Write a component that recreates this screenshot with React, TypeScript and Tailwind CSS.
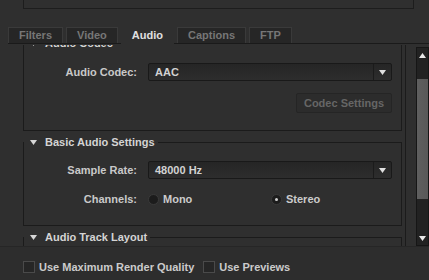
import React from "react";

const Tri = ({ down = true, color = "#d6d6d6" }: { down?: boolean; color?: string }) => (
  <svg width="7" height="5" viewBox="0 0 7 5">
    {down ? <polygon points="0,0 7,0 3.5,5" fill={color} /> : <polygon points="0,5 7,5 3.5,0" fill={color} />}
  </svg>
);

const Select = ({ value }: { value: string }) => (
  <div className="flex h-[18px] w-[244px] rounded-[2px] border border-[#191919] bg-gradient-to-b from-[#252525] to-[#2d2d2d]">
    <span className="flex-1 pl-[6px] text-[11px] font-bold leading-[16px] text-[#d2d2d2]">{value}</span>
    <span className="flex w-[18px] items-center justify-center border-l border-[#1b1b1b]">
      <Tri color="#e0e0e0" />
    </span>
  </div>
);

const Label = ({ children }: { children: React.ReactNode }) => (
  <span className="w-[113px] shrink-0 text-right text-[11px] font-bold text-[#c9c9c9]">{children}</span>
);

const Section = ({ title, children, className = "" }: { title: string; children?: React.ReactNode; className?: string }) => (
  <fieldset className={"m-0 min-w-0 border border-[#1b1b1b] p-0 " + className}>
    <legend className="p-0">
      <span className="flex h-[12px] items-center pl-[6px] pr-[3px]">
        <Tri />
        <span className="ml-[8px] text-[11px] font-bold leading-[12px] text-[#d4d4d4]">{title}</span>
      </span>
    </legend>
    {children}
  </fieldset>
);

const Radio = ({ checked, label }: { checked?: boolean; label: string }) => (
  <span className="flex items-center">
    <span className="flex h-[11px] w-[11px] items-center justify-center rounded-full border border-[#3a3a3a] bg-[#1c1c1c]">
      {checked && <span className="h-[3px] w-[3px] rounded-full bg-[#d0d0d0]" />}
    </span>
    <span className="ml-[4px] text-[11px] font-bold text-[#cbcbcb]">{label}</span>
  </span>
);

const Check = ({ label }: { label: string }) => (
  <span className="flex items-center">
    <span className="h-[12px] w-[12px] border border-[#4a4a4a] bg-[#262626]" />
    <span className="ml-[4px] text-[11px] font-bold text-[#cbcbcb]">{label}</span>
  </span>
);

export default function App() {
  const tabs = ["Filters", "Video", "Audio", "Captions", "FTP"];
  return (
    <div
      className="h-[280px] w-[429px] overflow-hidden bg-[#2f2f2f]"
      style={{ fontFamily: '"Liberation Sans", Arial, sans-serif' }}
    >
      <div className="ml-[23px] h-[9px] w-[391px] border-x border-b border-[#1d1d1d]" />
      <div className="ml-[8px] mt-[18px] flex h-[17px] items-start gap-[3px] border-b border-[#1a1a1a]">
        {tabs.map((t) =>
          t === "Audio" ? (
            <div key={t} className="relative z-10 flex h-[17px] items-center bg-[#2f2f2f] px-[11px] text-[11px] font-bold text-[#e0e0e0]">
              {t}
            </div>
          ) : (
            <div
              key={t}
              className="flex h-[16px] items-center border-x border-t border-[#3a3a3a] bg-[#262626] px-[10px] text-[11px] font-bold text-[#767676]"
            >
              {t}
            </div>
          )
        )}
      </div>
      <div className="h-[1px]" />
      <div className="flex h-[201px]">
        <div className="ml-[23px] w-[383px] overflow-hidden border-r border-[#1b1b1b] pr-[3px]">
          <div className="-mt-[8px]">
            <Section title="Audio Codec">
              <div className="flex items-center gap-[11px] pt-[14px]">
                <Label>Audio Codec:</Label>
                <Select value="AAC" />
              </div>
              <div className="flex justify-end pb-[17px] pr-[9px] pt-[12px]">
                <div className="flex h-[20px] w-[96px] items-center justify-center rounded-[2px] border border-[#252525] bg-[#2c2c2c] text-[11px] font-bold text-[#666666]">
                  Codec Settings
                </div>
              </div>
            </Section>
            <Section title="Basic Audio Settings" className="mt-[5px]">
              <div className="flex items-center gap-[11px] pt-[13px]">
                <Label>Sample Rate:</Label>
                <Select value="48000 Hz" />
              </div>
              <div className="mb-[20px] mt-[14px] flex h-[12px] items-center gap-[11px]">
                <Label>Channels:</Label>
                <div className="flex">
                  <div className="w-[123px]">
                    <Radio label="Mono" />
                  </div>
                  <Radio checked label="Stereo" />
                </div>
              </div>
            </Section>
            <Section title="Audio Track Layout" className="mt-[5px]">
              <div className="h-[40px]" />
            </Section>
          </div>
        </div>
        <div className="ml-[10px] mt-[2px] flex h-[199px] w-[13px] flex-col border border-[#161616] bg-[#222222]">
          <div className="flex h-[14px] items-center justify-center">
            <Tri down={false} color="#e8e8e8" />
          </div>
          <div className="h-[17px]" />
          <div className="h-[120px] bg-gradient-to-r from-[#5f5f5f] to-[#585858]" />
          <div className="flex-1" />
          <div className="flex h-[14px] items-center justify-center">
            <Tri color="#e8e8e8" />
          </div>
        </div>
      </div>
      <div className="flex h-[34px] items-start gap-[9px] border-t border-[#262626] bg-[#2d2d2d] pl-[23px] pt-[12px]">
        <Check label="Use Maximum Render Quality" />
        <Check label="Use Previews" />
      </div>
    </div>
  );
}
